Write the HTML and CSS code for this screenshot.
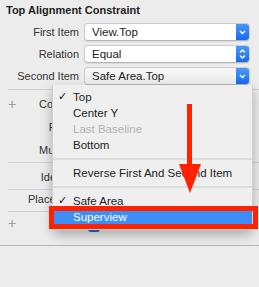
FILE: index.html
```html
<!DOCTYPE html>
<html lang="en">
<head>
    <meta charset="UTF-8">
    <meta name="viewport" content="width=device-width, initial-scale=1.0">
    <title>Top Alignment Constraint</title>
    <link rel="stylesheet" href="styles.css">
</head>
<body>
    <div class="panel">
        <h1 class="title">Top Alignment Constraint</h1>

        <div class="fields">
            <div class="field-row">
                <span class="label">First Item</span>
                <div class="popup">
                    <span class="popup-value">View.Top</span>
                    <span class="popup-button">
                        <svg width="13" height="18" viewBox="0 0 13 18"><path d="M4 8l2.5 2.5L9 8" fill="none" stroke="#fff" stroke-width="1.4"/></svg>
                    </span>
                </div>
            </div>
            <div class="field-row">
                <span class="label">Relation</span>
                <div class="popup">
                    <span class="popup-value">Equal</span>
                    <span class="popup-button">
                        <svg width="13" height="18" viewBox="0 0 13 18"><path d="M4 7.5l2.5-2.5L9 7.5M4 10.5l2.5 2.5L9 10.5" fill="none" stroke="#fff" stroke-width="1.4"/></svg>
                    </span>
                </div>
            </div>
            <div class="field-row">
                <span class="label">Second Item</span>
                <div class="popup popup-open">
                    <span class="popup-value">Safe Area.Top</span>
                    <span class="popup-button">
                        <svg width="13" height="18" viewBox="0 0 13 18"><path d="M4 8l2.5 2.5L9 8" fill="none" stroke="#fff" stroke-width="1.4"/></svg>
                    </span>
                </div>
            </div>
        </div>

        <div class="section section-values">
            <div class="sub-row"><span class="plus">+</span><span class="sub-label">Constant</span></div>
            <div class="sub-row"><span class="plus"></span><span class="sub-label">Priority</span></div>
            <div class="sub-row"><span class="plus"></span><span class="sub-label">Multiplier</span></div>
        </div>
        <div class="section section-id">
            <div class="sub-row"><span class="plus"></span><span class="sub-label">Identifier</span></div>
        </div>
        <div class="section section-placeholder">
            <div class="sub-row"><span class="plus"></span><span class="sub-label">Placeholder</span></div>
        </div>
        <div class="section section-last">
            <div class="sub-row"><span class="plus">+</span><span class="sub-label"></span><span class="checkbox"></span></div>
        </div>
    </div>

    <div class="menu">
        <div class="menu-item"><span class="check">✓</span>Top</div>
        <div class="menu-item">Center Y</div>
        <div class="menu-item disabled">Last Baseline</div>
        <div class="menu-item">Bottom</div>
        <div class="menu-sep"></div>
        <div class="menu-item">Reverse First And Second Item</div>
        <div class="menu-sep"></div>
        <div class="menu-item"><span class="check">✓</span>Safe Area</div>
        <div class="menu-item selected">Superview</div>
    </div>

    <div class="mark-box"></div>
    <svg class="mark-arrow" width="24" height="96" viewBox="0 0 24 96">
        <rect x="9" y="4" width="5" height="62" fill="#fe2200"/>
        <polygon points="1,64 23,64 12,93" fill="#fe2200"/>
    </svg>
</body>
</html>
```

FILE: styles.css
```css
* {
    margin: 0;
    padding: 0;
    box-sizing: border-box;
}

body {
    font-family: 'Liberation Sans', 'DejaVu Sans', sans-serif;
    background-color: #ececec;
    color: #262626;
    width: 259px;
    height: 287px;
    overflow: hidden;
    position: relative;
}

.title {
    font-size: 11px;
    font-weight: 700;
    line-height: 14px;
    padding: 3px 0 0 6px;
    margin-bottom: 6px;
    color: #222;
}

.fields {
    display: flex;
    flex-direction: column;
    gap: 4px;
}

.field-row {
    display: flex;
    align-items: center;
    gap: 5px;
    height: 18px;
}

.label {
    width: 79px;
    text-align: right;
    font-size: 11px;
    color: #333;
}

.popup {
    width: 166px;
    height: 18px;
    display: flex;
    background-color: #fff;
    border: 1px solid #cdcdcd;
    border-bottom-color: #b5b5b5;
    border-radius: 4px;
    box-shadow: 0 1px 1px rgba(0, 0, 0, 0.08);
    overflow: hidden;
}

.popup-open {
    background: linear-gradient(#f6f6f6, #ececec);
}

.popup-value {
    flex: 1;
    font-size: 11.5px;
    line-height: 16px;
    padding-left: 7px;
    color: #222;
}

.popup-button {
    width: 13px;
    height: 18px;
    margin-top: -1px;
    background: linear-gradient(#4b9bfb, #1568ee);
}

.popup-button svg {
    display: block;
}

.section {
    margin-left: 8px;
    border-top: 1px solid #d2d2d2;
}

.section-values {
    margin-top: 4px;
    padding: 5px 0 3px;
    display: flex;
    flex-direction: column;
    gap: 5px;
}

.section-id {
    padding: 5px 0 3px;
}

.section-placeholder {
    padding: 0 0 4px;
}

.section-last {
    margin-left: 0;
    padding: 2px 0 13px 8px;
    border-bottom: 1px solid #b3b3b3;
    border-top: none;
    position: relative;
}

.section-last::before {
    content: '';
    position: absolute;
    top: -1px;
    left: 8px;
    right: 0;
    border-top: 1px solid #d2d2d2;
}

.sub-row {
    display: flex;
    align-items: center;
    height: 18px;
}

.plus {
    width: 20px;
    font-size: 14px;
    color: #9a9a9a;
    font-weight: 300;
}

.sub-label {
    width: 55px;
    text-align: right;
    font-size: 11px;
    color: #333;
    white-space: nowrap;
}

.checkbox {
    width: 12px;
    height: 12px;
    margin: 6px 0 0 5px;
    border-radius: 3px;
    background: linear-gradient(#4b9bfb, #1568ee);
}

.menu {
    position: absolute;
    left: 52px;
    top: 85px;
    width: 201px;
    padding: 4px 0;
    background-color: #efefef;
    border: 1px solid #cfcfcf;
    border-top: none;
    border-radius: 0 0 5px 5px;
    box-shadow: 0 5px 12px rgba(0, 0, 0, 0.28);
}

.menu-item {
    position: relative;
    height: 16px;
    line-height: 16px;
    padding-left: 20px;
    font-size: 11.5px;
    color: #1d1d1d;
    white-space: nowrap;
}

.menu-item.disabled {
    color: #b2b2b2;
}

.menu-item.selected {
    background-color: #3d8ef8;
    color: #fff;
}

.check {
    position: absolute;
    left: 5px;
    top: 0;
    font-size: 11px;
    font-weight: 700;
    color: #111;
    font-family: 'DejaVu Sans', sans-serif;
}

.menu-sep {
    height: 12px;
    position: relative;
}

.menu-sep::after {
    content: '';
    position: absolute;
    left: 0;
    right: 0;
    top: 5px;
    height: 2px;
    background-color: #dcdcdc;
}

.mark-box {
    position: absolute;
    left: 49px;
    top: 206px;
    width: 209px;
    height: 23px;
    border: 5px solid #fe2200;
}

.mark-arrow {
    position: absolute;
    left: 178px;
    top: 100px;
}
```
